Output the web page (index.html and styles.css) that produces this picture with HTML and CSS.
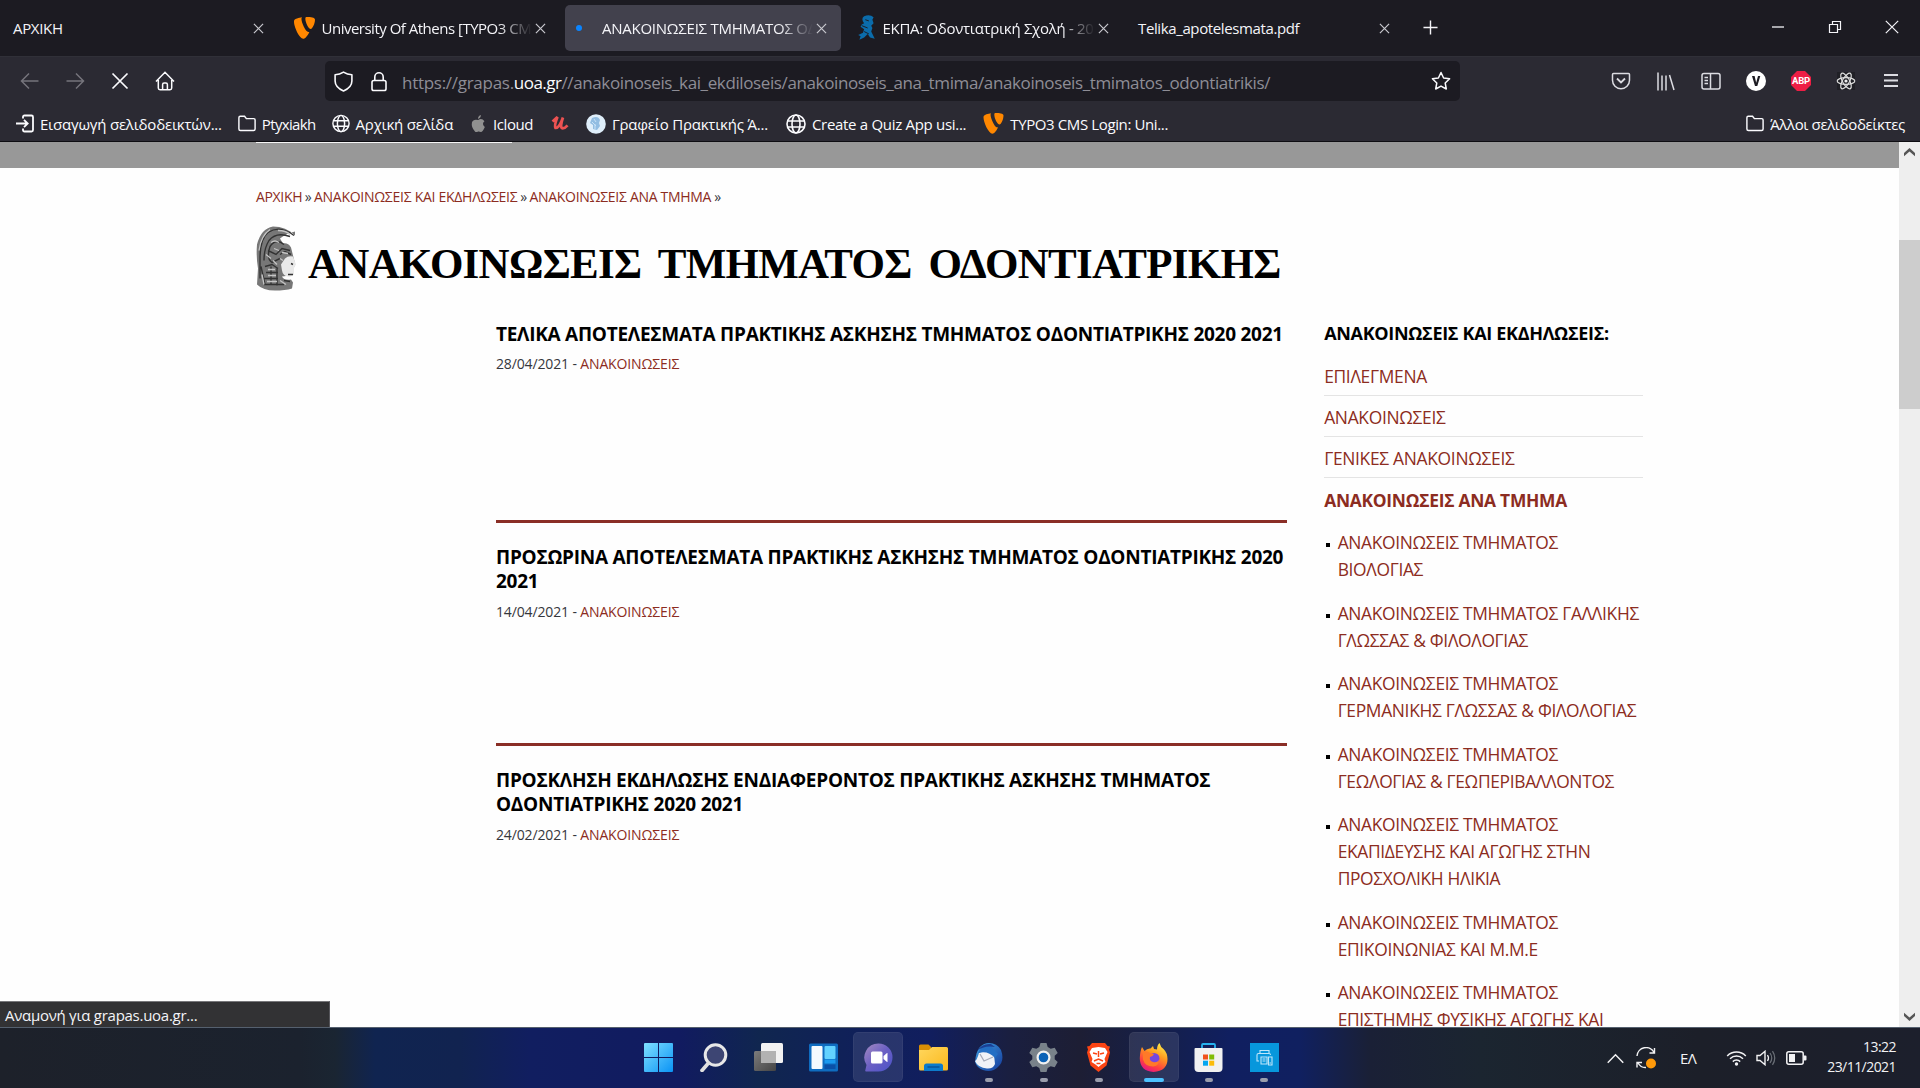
FILE: index.html
```html
<!DOCTYPE html>
<html lang="el">
<head>
<meta charset="utf-8">
<title>ΑΝΑΚΟΙΝΩΣΕΙΣ ΤΜΗΜΑΤΟΣ ΟΔΟΝΤΙΑΤΡΙΚΗΣ</title>
<link rel="stylesheet" href="styles.css">
</head>
<body>
<svg class="defs" aria-hidden="true">
  <defs>
    <symbol id="x" viewBox="0 0 12 12"><path d="M1 1l10 10M11 1L1 11" fill="none" stroke="currentColor" stroke-width="1.3"/></symbol>
    <symbol id="typo3" viewBox="0 0 20 21"><path fill="#ff8700" d="M14.6 14.3c-.3.1-.6.1-.9.1-2.700 0-6.600-9.300-6.600-12.400 0-1.100.3-1.500.6-1.800C4.400.6.800 1.800.2 3.200 0 3.600 0 4 0 4.600c0 4.800 5.100 16.200 8.900 16.200 1.700 0 4.100-2.900 5.700-6.500zM12.300 0c3.500 0 7.700.5 7.700 2.500 0 4.100-2.600 9-3.900 9-2.400 0-5.300-6.500-5.300-9.800 0-1.500.6-1.700 1.500-1.700z"/></symbol>
    <symbol id="folder" viewBox="0 0 20 18"><path d="M2.500 1h4.800l2 2.600h8.200q1.500 0 1.500 1.500v10q0 1.700-1.700 1.700H2.700Q1 16.800 1 15.100V2.500Q1 1 2.500 1z" fill="none" stroke="currentColor" stroke-width="1.600"/></symbol>
    <symbol id="globe" viewBox="0 0 20 20"><g fill="none" stroke="currentColor" stroke-width="1.600"><circle cx="10" cy="10" r="9"/><ellipse cx="10" cy="10" rx="4" ry="9"/><path d="M1.500 7h17M1.500 13h17"/></g></symbol>
    <linearGradient id="gWin" x1="0" y1="0" x2="1" y2="1"><stop offset="0" stop-color="#7fe0ff"/><stop offset="1" stop-color="#0a93f5"/></linearGradient>
    <linearGradient id="gChat" x1="0" y1="0" x2="1" y2="1"><stop offset="0" stop-color="#a58bc0"/><stop offset=".5" stop-color="#6a5fc4"/><stop offset="1" stop-color="#4a52c8"/></linearGradient>
    <linearGradient id="gFolder" x1="0" y1="0" x2="1" y2="1"><stop offset="0" stop-color="#ffd75e"/><stop offset="1" stop-color="#fbb81c"/></linearGradient>
    <linearGradient id="gFox" x1=".8" y1="0" x2=".3" y2="1"><stop offset="0" stop-color="#fff14a"/><stop offset=".4" stop-color="#ff9a1f"/><stop offset=".75" stop-color="#ff4040"/><stop offset="1" stop-color="#e31587"/></linearGradient>
    <linearGradient id="gBird" x1="0" y1="0" x2="1" y2="1"><stop offset="0" stop-color="#3fa0e0"/><stop offset="1" stop-color="#143a9c"/></linearGradient>
    <linearGradient id="gGrey" x1="0" y1="0" x2="1" y2="1"><stop offset="0" stop-color="#7c7c7c"/><stop offset="1" stop-color="#444"/></linearGradient>
  </defs>
</svg>

<div class="window">
  <header class="tabs">
    <div class="tab"><span class="tab-title t-home">ΑΡΧΙΚΗ</span><svg class="close"><use href="#x"/></svg></div>
    <div class="tab"><svg class="favicon"><use href="#typo3"/></svg><span class="tab-title t-typo">University Of Athens [TYPO3 CM</span><svg class="close"><use href="#x"/></svg></div>
    <div class="tab active"><i class="dot"></i><span class="tab-title t-ann">ΑΝΑΚΟΙΝΩΣΕΙΣ ΤΜΗΜΑΤΟΣ ΟΔ</span><svg class="close"><use href="#x"/></svg></div>
    <div class="tab"><svg class="favicon narrow" viewBox="0 0 16 22"><path fill="#0b6cab" d="M6 1Q11-1 14 2l-1 2 1 3-2 2 1 2-1 3 3 6-4-1-2-3-3 3-4 2 1-3-2-1 4-2 1-3-3-2 1-2 2-1Q3 3 6 1z"/><path d="M7 4l3 1M4 9l5 2M6 14l4 2" stroke="#1c1b22" stroke-width=".8"/></svg><span class="tab-title t-ekpa">ΕΚΠΑ: Οδοντιατρική Σχολή - 20</span><svg class="close"><use href="#x"/></svg></div>
    <div class="tab"><span class="tab-title t-pdf">Telika_apotelesmata.pdf</span><svg class="close"><use href="#x"/></svg></div>
    <svg class="newtab" viewBox="0 0 16 16"><path d="M8 .5v15M.5 8h15" stroke="currentColor" stroke-width="1.500"/></svg>
    <div class="controls">
      <svg viewBox="0 0 14 14"><path d="M1 7h12" stroke="currentColor" stroke-width="1.300"/></svg>
      <svg viewBox="0 0 14 14"><path d="M1.500 4.500h8v8h-8zM4.500 4V1.500h8v8H10" fill="none" stroke="currentColor" stroke-width="1.200"/></svg>
      <svg viewBox="0 0 14 14"><path d="M.8.8l12.400 12.400M13.200.8L.8 13.200" stroke="currentColor" stroke-width="1.200"/></svg>
    </div>
  </header>

  <div class="navbar">
    <div class="nav-buttons">
      <svg class="dim" viewBox="0 0 20 20"><path d="M18.500 10H2M9 2.500L1.500 10 9 17.500" fill="none" stroke="currentColor" stroke-width="1.500"/></svg>
      <svg class="dim" viewBox="0 0 20 20"><path d="M1.500 10H18M11 2.500l7.500 7.500-7.500 7.500" fill="none" stroke="currentColor" stroke-width="1.500"/></svg>
      <svg viewBox="0 0 20 20"><path d="M2.500 2.500l15 15M17.500 2.500l-15 15" stroke="currentColor" stroke-width="1.700"/></svg>
      <svg viewBox="0 0 20 20"><path d="M1 10.500L10 1.300l9 9.200M3.300 9v8q0 1.700 1.700 1.700h10q1.700 0 1.700-1.700V9M7.600 18.500v-5q0-1.500 1.500-1.500h1.800q1.500 0 1.500 1.500v5" fill="none" stroke="currentColor" stroke-width="1.500"/></svg>
    </div>
    <div class="urlbar">
      <svg class="shield" viewBox="0 0 18 20"><path d="M9 1q3.500 2.300 8 2.500v6q0 6-8 9.500-8-3.500-8-9.500v-6Q5.500 3.300 9 1z" fill="none" stroke="currentColor" stroke-width="1.500" stroke-linejoin="round"/></svg>
      <svg class="lock" viewBox="0 0 16 20"><rect x="1" y="9" width="14" height="10" rx="1.800" fill="none" stroke="currentColor" stroke-width="1.600"/><path d="M3.800 9V5.500a4.200 4.200 0 018.400 0V9" fill="none" stroke="currentColor" stroke-width="1.600"/></svg>
      <div class="url"><span class="u1">https://grapas.</span><span class="host">uoa.gr</span><span class="u2">//anakoinoseis_kai_ekdiloseis/anakoinoseis_ana_tmima/anakoinoseis_tmimatos_odontiatrikis/</span></div>
      <svg class="star" viewBox="0 0 20 20"><path d="M10 1.500l2.600 5.500 6 .8-4.400 4.200 1.100 6L10 15.100 4.700 18l1.100-6L1.400 7.800l6-.8z" fill="none" stroke="currentColor" stroke-width="1.500" stroke-linejoin="round"/></svg>
    </div>
    <div class="extensions">
      <svg viewBox="0 0 20 20"><path d="M2.500 2.500h15q1 0 1 1v5.700a8.500 8.500 0 01-17 0V3.500q0-1 1-1z" fill="none" stroke="currentColor" stroke-width="1.500"/><path d="M6 7.500l4 4 4-4" fill="none" stroke="currentColor" stroke-width="1.800"/></svg>
      <svg viewBox="0 0 20 20"><path d="M2 1.500v18M6 4.500v15M10 4.500v15M13.500 4l4.500 15" fill="none" stroke="currentColor" stroke-width="1.500"/></svg>
      <svg viewBox="0 0 20 20"><rect x="1" y="2.500" width="18" height="15.500" rx="2" fill="none" stroke="currentColor" stroke-width="1.500"/><path d="M9.500 2.500V18M3.500 6.500h3.500M3.500 9.500h3.500M3.500 12.500h3.500" stroke="currentColor" stroke-width="1.500"/></svg>
      <svg viewBox="0 0 20 20"><circle cx="10" cy="10" r="10" fill="#fff"/><path d="M6 5h2.600l1.600 6.800L12 5h2.300l-3 10H9z" fill="#1c1b22"/></svg>
      <span class="abp">ABP</span>
      <svg viewBox="0 0 20 20"><rect x="1" y="1" width="18" height="18" fill="#202026"/><g fill="none" stroke="#ddd" stroke-width="1.200"><ellipse cx="10" cy="10" rx="8.800" ry="3.400"/><ellipse cx="10" cy="10" rx="8.800" ry="3.400" transform="rotate(60 10 10)"/><ellipse cx="10" cy="10" rx="8.800" ry="3.400" transform="rotate(120 10 10)"/></g><circle cx="10" cy="10" r="1.600" fill="#eee"/></svg>
      <svg viewBox="0 0 20 20"><path d="M3 4h14M3 9.500h14M3 15h14" stroke="currentColor" stroke-width="1.800"/></svg>
    </div>
  </div>

  <div class="bookmarks">
    <span class="bm"><svg viewBox="0 0 18 18"><path d="M7 4V2.500Q7 1 8.500 1h7Q17 1 17 2.500v13q0 1.500-1.500 1.500h-7Q7 17 7 15.500V14M0 9h11.500M8 5.300L11.700 9 8 12.700" fill="none" stroke="currentColor" stroke-width="1.800"/></svg><b class="s1">Εισαγωγή σελιδοδεικτών...</b></span>
    <span class="bm"><svg><use href="#folder"/></svg><b class="s2">Ptyxiakh</b></span>
    <span class="bm"><svg><use href="#globe"/></svg><b class="s3">Αρχική σελίδα</b></span>
    <span class="bm"><svg viewBox="0 0 18 20"><path fill="#909090" d="M12 1q.2 3-3 4.200Q9 2 12 1zM9.200 6.300Q13 4 15.800 7.500q-3.300 2.500.4 6.300Q14 19 12 19q-1.500-.8-2.800-.6-2 .9-3.200.3Q1.600 14 2.600 9 4 5 9.200 6.300z"/></svg><b class="s4">Icloud</b></span>
    <span class="bm udemy"><svg viewBox="0 0 18 18"><path d="M1.500 7Q5 4 6.500 2.500 3 11 4.500 13.500 8 14 12 3 8.500 13 11.500 13.800q2.500 0 5-3" fill="none" stroke="#ec5252" stroke-width="2.700"/></svg></span>
    <span class="bm"><svg class="seal" viewBox="0 0 20 20"><circle cx="10" cy="10" r="9.800" fill="#dfeefa"/><path d="M6 4q6-3 8 2l-1 3 1 3-3 4-4-1V11L4 9z" fill="#92bde2"/><path d="M8 5l2 3M6 8l4 4M9 10v5" stroke="#c9e2f6"/></svg><b class="s6">Γραφείο Πρακτικής Ά...</b></span>
    <span class="bm"><svg class="big"><use href="#globe"/></svg><b class="s7">Create a Quiz App usi...</b></span>
    <span class="bm"><svg class="wide"><use href="#typo3"/></svg><b class="s8">TYPO3 CMS Login: Uni...</b></span>
    <span class="bm last"><svg><use href="#folder"/></svg><b class="s9">Άλλοι σελιδοδείκτες</b></span>
  </div>

  <div class="viewport">
    <div class="page">
      <div class="band"><div class="band-line"></div></div>
      <div class="container">
        <nav class="crumbs"><a class="c1">ΑΡΧΙΚΗ</a><i>»</i><a class="c2">ΑΝΑΚΟΙΝΩΣΕΙΣ ΚΑΙ ΕΚΔΗΛΩΣΕΙΣ</a><i>»</i><a class="c3">ΑΝΑΚΟΙΝΩΣΕΙΣ ΑΝΑ ΤΜΗΜΑ</a><i>»</i></nav>
        <div class="heading">
          <svg class="athena" viewBox="0 0 40 64">
            <path fill="#777" d="M39 9Q30 0 17 0 5 2 1 18 0 30 2 42L1 58q6 6 18 6 10 0 17-2l1-6-2-3q-7 1-9-3l8-1 3-4 2-8-2-8-2-8q-3-5-8-4l-3-5q6-5 15-7z"/>
            <path fill="#e9e9e9" d="M29 32q3-3 8-2l3 8-2 3v7l-3 2q-8 1-9-6l-1-6z"/>
            <g fill="none" stroke="#333" stroke-width="1.400"><path d="M38 9Q24-2 12 6 4 12 4 32v20M34 10Q20 5 13 14q-5 8-5 20M28 18q-8-7-14 2-4 12 2 16l8-4M12 24l8 4 6-6 8 2M9 40l7-2 6 4M10 46h12M8 52h14M8 58h20M15 40v18M21 42v17M5 40l4 18M24 28l5-3 6 3M35 37l2 1M32 48l5 0M28 54l6 1"/></g>
            <g fill="none" stroke="#c4c4c4" stroke-width="1.300"><path d="M14 3Q5 9 3 24M22 4q8 0 12 4M15 16q4-3 8 0M10 28l5 4M17 34l4 4M12 43h7M12 49h8M6 48l2 10M24 54l6 4M18 22l5 2M11 55h10M26 26l6 1M24 32l3 2"/></g>
          </svg>
          <h1>ΑΝΑΚΟΙΝΩΣΕΙΣ ΤΜΗΜΑΤΟΣ ΟΔΟΝΤΙΑΤΡΙΚΗΣ</h1>
        </div>
        <div class="columns">
          <main>
            <article class="first"><h2>ΤΕΛΙΚΑ ΑΠΟΤΕΛΕΣΜΑΤΑ ΠΡΑΚΤΙΚΗΣ ΑΣΚΗΣΗΣ ΤΜΗΜΑΤΟΣ ΟΔΟΝΤΙΑΤΡΙΚΗΣ 2020 2021</h2><p>28/04/2021 - <a>ΑΝΑΚΟΙΝΩΣΕΙΣ</a></p></article>
            <article><h2>ΠΡΟΣΩΡΙΝΑ ΑΠΟΤΕΛΕΣΜΑΤΑ ΠΡΑΚΤΙΚΗΣ ΑΣΚΗΣΗΣ ΤΜΗΜΑΤΟΣ ΟΔΟΝΤΙΑΤΡΙΚΗΣ 2020<br>2021</h2><p>14/04/2021 - <a>ΑΝΑΚΟΙΝΩΣΕΙΣ</a></p></article>
            <article class="open"><h2>ΠΡΟΣΚΛΗΣΗ ΕΚΔΗΛΩΣΗΣ ΕΝΔΙΑΦΕΡΟΝΤΟΣ ΠΡΑΚΤΙΚΗΣ ΑΣΚΗΣΗΣ ΤΜΗΜΑΤΟΣ<br>ΟΔΟΝΤΙΑΤΡΙΚΗΣ 2020 2021</h2><p>24/02/2021 - <a>ΑΝΑΚΟΙΝΩΣΕΙΣ</a></p></article>
          </main>
          <aside>
            <h3>ΑΝΑΚΟΙΝΩΣΕΙΣ ΚΑΙ ΕΚΔΗΛΩΣΕΙΣ:</h3>
            <a class="item">ΕΠΙΛΕΓΜΕΝΑ</a>
            <a class="item">ΑΝΑΚΟΙΝΩΣΕΙΣ</a>
            <a class="item">ΓΕΝΙΚΕΣ ΑΝΑΚΟΙΝΩΣΕΙΣ</a>
            <a class="item current">ΑΝΑΚΟΙΝΩΣΕΙΣ ΑΝΑ ΤΜΗΜΑ</a>
            <ul>
              <li>ΑΝΑΚΟΙΝΩΣΕΙΣ ΤΜΗΜΑΤΟΣ<br>ΒΙΟΛΟΓΙΑΣ</li>
              <li>ΑΝΑΚΟΙΝΩΣΕΙΣ ΤΜΗΜΑΤΟΣ ΓΑΛΛΙΚΗΣ<br>ΓΛΩΣΣΑΣ &amp; ΦΙΛΟΛΟΓΙΑΣ</li>
              <li>ΑΝΑΚΟΙΝΩΣΕΙΣ ΤΜΗΜΑΤΟΣ<br>ΓΕΡΜΑΝΙΚΗΣ ΓΛΩΣΣΑΣ &amp; ΦΙΛΟΛΟΓΙΑΣ</li>
              <li>ΑΝΑΚΟΙΝΩΣΕΙΣ ΤΜΗΜΑΤΟΣ<br>ΓΕΩΛΟΓΙΑΣ &amp; ΓΕΩΠΕΡΙΒΑΛΛΟΝΤΟΣ</li>
              <li>ΑΝΑΚΟΙΝΩΣΕΙΣ ΤΜΗΜΑΤΟΣ<br>ΕΚΑΠΙΔΕΥΣΗΣ ΚΑΙ ΑΓΩΓΗΣ ΣΤΗΝ<br>ΠΡΟΣΧΟΛΙΚΗ ΗΛΙΚΙΑ</li>
              <li>ΑΝΑΚΟΙΝΩΣΕΙΣ ΤΜΗΜΑΤΟΣ<br>ΕΠΙΚΟΙΝΩΝΙΑΣ ΚΑΙ Μ.Μ.Ε</li>
              <li>ΑΝΑΚΟΙΝΩΣΕΙΣ ΤΜΗΜΑΤΟΣ<br>ΕΠΙΣΤΗΜΗΣ ΦΥΣΙΚΗΣ ΑΓΩΓΗΣ ΚΑΙ</li>
            </ul>
          </aside>
        </div>
      </div>
      <div class="status">Αναμονή για grapas.uoa.gr...</div>
    </div>
    <div class="scrollbar">
      <svg viewBox="0 0 10 8"><path d="M0 7.500V4.500L5 0l5 4.500v3L5 3.200z" fill="#555"/></svg>
      <div class="thumb"></div>
      <svg viewBox="0 0 10 8"><path d="M0 .5v3L5 8l5-4.500v-3L5 4.800z" fill="#555"/></svg>
    </div>
  </div>

  <footer class="taskbar">
    <div class="tray-left"></div>
    <div class="apps">
      <div class="app"><svg viewBox="0 0 29 29"><path fill="url(#gWin)" d="M0 1q0-1 1-1h13v14H0zM15 0h13q1 0 1 1v13H15zM0 15h14v14H1q-1 0-1-1zM15 15h14v13q0 1-1 1H15z"/></svg></div>
      <div class="app"><svg viewBox="0 0 29 29"><circle cx="16.500" cy="12" r="10.300" fill="#3d4573" stroke="#e8e8e8" stroke-width="3"/><path d="M9.500 20L3 27.500" stroke="#e0e0e0" stroke-width="3.600" stroke-linecap="round"/></svg></div>
      <div class="app"><svg viewBox="0 0 29 29"><rect y="8" width="22" height="20" rx="1.500" fill="url(#gGrey)"/><rect x="7" width="22" height="20" rx="1.500" fill="#f2f2f2"/><path d="M7 8h15v12H7z" fill="#b2b2b2"/></svg></div>
      <div class="app"><svg viewBox="0 0 29 29"><rect width="29" height="28" y=".5" rx="1.500" fill="#0f6cc0"/><rect x="2.500" y="3" width="11" height="23" rx="1" fill="#f5fafe"/><rect x="15.500" y="3" width="11" height="13" rx="1" fill="#63d2ff"/><path d="M15.500 16.500h11v4h-11z" fill="#1b9af0"/><path d="M15.500 21.500h11V26h-11z" fill="#0a50a8"/></svg></div>
      <div class="app on"><svg viewBox="0 0 29 29"><path d="M14.500.5a14 14 0 110 28H2q-1 0-.7-1.200L2.500 22A14 14 0 0114.500.500z" fill="url(#gChat)"/><rect x="7" y="8.500" width="11.500" height="12" rx="1.500" fill="#fff"/><path d="M19.500 13l3.500-3q.5-.3.5.5v8q0 .8-.5.5l-3.500-3z" fill="#fff"/></svg></div>
      <div class="app"><svg viewBox="0 0 29 29"><path d="M0 8V3q0-1.500 1.500-1.500h8L12 4v4z" fill="#d98e04"/><path d="M0 7h10l3-3h14.500Q29 4 29 5.500V26q0 1.500-1.500 1.500h-26Q0 27.500 0 26z" fill="url(#gFolder)"/><path d="M5 28v-5q0-2.500 2.500-2.500h14Q24 20.500 24 23v5z" fill="#0d7bcb"/><path d="M8.500 24h12" stroke="#0a4f94" stroke-width="1.300"/></svg></div>
      <div class="app run"><svg viewBox="0 0 29 29"><path d="M15 0q8 0 12 7 4 11-3 17-6 6-15 3Q3 25 1 19 2 8 6 4q4-4 9-4z" fill="url(#gBird)"/><path d="M5 10q7-4 15 2l1 9q-2 5-8 4.500Q4 25 1 18q2-1 4-8z" fill="#f0f2f7"/><path d="M6 11l4 7 9-4" fill="none" stroke="#a8adbb" stroke-width="1.300"/><path d="M4 10Q8 1 17 3l7 8-3 4Q14 7 4 10z" fill="#246fc4"/><path d="M3 8Q8 0 17 1l4 3Q10 2 3 8z" fill="#1a3f94"/></svg></div>
      <div class="app run"><svg viewBox="0 0 29 29"><path fill="#79828a" d="M11.500 0h6l1.200 4 3 1.700 4-1 3 5.200-3 2.900v3.400l3 2.900-3 5.200-4-1-3 1.700-1.200 4h-6l-1.200-4-3-1.700-4 1-3-5.200 3-2.900v-3.400L.3 9.900l3-5.200 4 1 3-1.700z"/><circle cx="14.500" cy="14.500" r="5.900" fill="#0b62b6" stroke="#f1f1f1" stroke-width="2.200"/></svg></div>
      <div class="app run"><svg viewBox="0 0 29 29"><path d="M8 0h13l2.500 3 2.500.5L25 6.500l1 3-3.500 13L14.500 29l-8-6.500L3 9.500l1-3-1-3 2.500-.5z" fill="#fb4413"/><path d="M8 5l6.500-1L21 5l2.500 4-3 7 1 3-4 2.500-3 2.500-3-2.500-4-2.500 1-3-3-7z" fill="#fff"/><path d="M9 10l4 1M20 10l-4 1M14.500 8v6M10 18l4.500-2 4.500 2M12.500 20.500h4" stroke="#fb4413" stroke-width="1.500" fill="none"/></svg></div>
      <div class="app run on focus"><svg viewBox="0 0 29 29"><path d="M3 4l2.500 4q3-3 6-2.500L14 3l1 3 3 .5Q18 2 20.500 0q1 4 4 6 4 4 4 10 0 12-14 13Q1 28 .8 15.500 1 8 3 4z" fill="url(#gFox)"/><circle cx="15" cy="15.500" r="5.500" fill="#7547e0"/><path d="M4 8q5 0 7 2l4 1q-1 2.500-4 3-1 4 3 5 4 1 6-2 0 6-6 6.500-8 0-10-7z" fill="#ff7a28"/></svg></div>
      <div class="app run"><svg viewBox="0 0 29 29"><path d="M8 6V2q0-1 1-1h11q1 0 1 1v4" fill="none" stroke="#27b2ee" stroke-width="1.800"/><path d="M.5 6q0-1 1-1h26q1 0 1 1v19q0 4-4 4h-20q-4 0-4-4z" fill="#f1f1f1"/><path d="M9 11.500h5v5H9z" fill="#f1511b"/><path d="M15.200 11.500h5v5h-5z" fill="#80bc06"/><path d="M9 17.700h5v5H9z" fill="#05a6f0"/><path d="M15.200 17.700h5v5h-5z" fill="#fbbc09"/></svg></div>
      <div class="app run"><svg viewBox="0 0 29 29"><path d="M0 0h29v29H0z" fill="#0797dc"/><path d="M10 10V7.500h9V10M9 18H7v-6q0-1.500 1.500-1.500H19q1.500 0 1.500 1.500M11 14h6v7h-6zM18.500 14h3.500v8h-3.500zM12.500 16h3M12.500 18h3M19.500 20h1.500" fill="none" stroke="#bfe6fa" stroke-width="1.100"/></svg></div>
    </div>
    <div class="tray">
      <svg class="chev" viewBox="0 0 16 10"><path d="M.7 9L8 1.500 15.300 9" fill="none" stroke="currentColor" stroke-width="1.400"/></svg>
      <svg class="sync" viewBox="0 0 20 22"><path d="M1 9a9 9 0 0117-3.500M18.500 1v5h-5M1 20.500v-5h5M2 16q3 5 8 4.500" fill="none" stroke="currentColor" stroke-width="1.400"/><circle cx="15" cy="16.500" r="5" fill="#ff9a0a"/></svg>
      <span class="lang">ΕΛ</span>
      <svg class="wifi" viewBox="0 0 20 16"><g fill="none" stroke="currentColor" stroke-width="1.500"><path d="M.7 6a13 13 0 0118.600 0M3.500 8.800a9.200 9.200 0 0113 0M6.300 11.600a5.200 5.200 0 017.400 0"/></g><circle cx="10" cy="14" r="1.700" fill="currentColor"/></svg>
      <svg class="vol" viewBox="0 0 20 16"><path d="M1 5.500h3L9 1.300v13.400l-5-4.200H1z" fill="none" stroke="currentColor" stroke-width="1.400"/><path d="M11.500 5q2 3 0 6" fill="none" stroke="currentColor" stroke-width="1.300"/><path d="M14 3q3.500 5 0 10M16.500 1.200q4.500 6.800 0 13.600" fill="none" stroke="#6b7078" stroke-width="1.200"/></svg>
      <svg class="bat" viewBox="0 0 21 14"><rect x=".8" y=".8" width="16.400" height="12.400" rx="2" fill="none" stroke="currentColor" stroke-width="1.500"/><path d="M3 3h6v8H3zM18 4.500h1.500q1 0 1 1v3q0 1-1 1H18z" fill="currentColor"/></svg>
      <div class="clock"><span>13:22</span><span>23/11/2021</span></div>
    </div>
  </footer>
</div>
</body>
</html>
```
FILE: styles.css
```css
* { box-sizing: border-box; }
body { margin: 0; font: 15px "Open Sans", "Noto Sans", sans-serif; }
h1, h2, h3, p, ul { margin: 0; padding: 0; }
.defs { position: absolute; width: 0; height: 0; }
svg { flex: none; display: block; }

.window { width: 1920px; height: 1088px; display: flex; flex-direction: column; overflow: hidden; }

/* Tab strip */
.tabs { height: 56px; flex: none; display: flex; align-items: flex-start; padding: 5px 21px 0 2px; gap: 5.500px; background: #1c1b22; color: #f4f4f8; }
.tab { width: 276px; height: 46px; display: flex; align-items: center; gap: 7px; padding: 0 14px 0 10px; border-radius: 5px; flex: none; }
.tab.active { background: #42414d; }
.tab-title { flex: 1; min-width: 0; white-space: nowrap; line-height: 24px; }
.favicon { width: 21px; height: 26px; }
.favicon.narrow { width: 19px; }
.tab .close { width: 11px; height: 11px; color: #c9c9cf; margin-left: -4px; }
.dot { width: 6px; height: 6px; border-radius: 50%; background: #0a84ff; margin: 0 13px 0 1px; flex: none; }
.t-home { letter-spacing: -.32px; padding-left: 1px; }
.t-typo { letter-spacing: -.5px; }
.t-ann { letter-spacing: -.25px; }
.t-ekpa { letter-spacing: -.3px; }
.t-pdf { letter-spacing: -.38px; }
.t-typo, .t-ann, .t-ekpa { -webkit-mask-image: linear-gradient(90deg, #000 84%, transparent 100%); mask-image: linear-gradient(90deg, #000 84%, transparent 100%); }
.newtab { width: 15px; height: 15px; margin: 15px 0 0 13px; }
.controls { margin: 15px 0 0 auto; display: flex; gap: 43px; }
.controls svg { width: 14px; height: 14px; }

/* Address row */
.navbar { height: 52px; flex: none; display: flex; align-items: flex-start; background: #2b2a33; color: #fbfbfe; padding: 4px 19px 0 20px; border-top: 1px solid #303038; }
.nav-buttons { display: flex; gap: 25px; padding-top: 10px; width: 305px; }
.nav-buttons svg { width: 20px; height: 20px; }
.nav-buttons .dim { color: #75747c; }
.urlbar { width: 1135px; height: 40px; display: flex; align-items: center; padding: 0 9px; background: #1c1b22; border-radius: 5px; }
.shield { width: 19px; height: 21px; }
.lock { width: 16px; height: 21px; margin-left: 18px; }
.url { margin: 3px auto 0 15px; font-size: 17px; color: #8e8d96; white-space: nowrap; }
.url .u1 { letter-spacing: -.28px; }
.url .host { color: #fbfbfe; letter-spacing: -.52px; }
.url .u2 { letter-spacing: -.382px; }
.star { width: 20px; height: 20px; }
.extensions { margin-left: auto; display: flex; gap: 25px; padding-top: 10px; }
.extensions svg, .abp { width: 20px; height: 20px; color: #dcdce2; }
.abp { background: #ed1e45; clip-path: polygon(30% 0, 70% 0, 100% 30%, 100% 70%, 70% 100%, 30% 100%, 0 70%, 0 30%); font: 700 9.500px/20px Roboto, sans-serif; color: #fff; text-align: center; letter-spacing: -.2px; }

/* Bookmarks row */
.bookmarks { height: 34px; flex: none; display: flex; align-items: center; gap: 16px; padding: 0 15px 2px 16px; background: #2b2a33; border-bottom: 1px solid #0e0d12; color: #fbfbfe; }
.bm { display: flex; align-items: center; gap: 6px; }
.bm svg { width: 18px; height: 19px; }
.bm svg.seal, .bm svg.big { width: 20px; height: 20px; }
.bm svg.wide { width: 21px; height: 21px; }
.bm b { font-weight: 400; white-space: nowrap; padding-top: 1px; }
.bm.last { margin-left: auto; }
.bm.udemy { padding: 0 1px 0 2px; }
.s1 { letter-spacing: -.21px; }
.s2 { letter-spacing: -.65px; }
.s3 { letter-spacing: -.22px; }
.s4 { letter-spacing: -.45px; }
.s6 { letter-spacing: -.21px; padding-right: 2px; }
.s7 { letter-spacing: -.3px; padding-right: 1px; }
.s8 { letter-spacing: -.38px; }
.s9 { letter-spacing: -.36px; }

/* Page */
.viewport { height: 885px; flex: none; display: flex; }
.page { flex: 1; min-width: 0; background: #fefefe; overflow: hidden; position: relative; }
.band { height: 25.500px; background: #989898; padding-left: 256px; }
.band-line { width: 256px; height: 1px; background: #f5f5f5; }
.container { width: 1387px; margin-left: 256px; }
.crumbs { display: flex; padding-top: 19px; height: 58px; font-size: 14px; line-height: 20px; color: #35373c; white-space: nowrap; }
.crumbs a { color: #8c2c21; }
.crumbs i { font-style: normal; width: 11.500px; text-align: center; }
.crumbs .c1 { width: 46.500px; letter-spacing: -.33px; }
.crumbs .c2 { width: 204px; letter-spacing: -.28px; }
.crumbs .c3 { width: 182.500px; letter-spacing: -.3px; }
.heading { display: flex; height: 77px; }
.athena { width: 40px; height: 65px; }
h1 { margin: 13px 0 0 12px; font: 700 43px/50px "Liberation Serif", serif; letter-spacing: -.72px; word-spacing: 7px; color: #000; white-space: nowrap; }
.columns { display: flex; gap: 38px; padding-left: 240px; }
main { width: 791px; }
article { height: 223px; padding-top: 22px; border-bottom: 3px solid #8a2e26; }
article.first { height: 220px; padding-top: 19px; }
article.open { border: 0; }
h2 { font-size: 19px; line-height: 24.500px; letter-spacing: -.26px; color: #000; white-space: nowrap; }
article p { margin-top: 8px; font-size: 14px; line-height: 20px; letter-spacing: -.14px; color: #35373c; }
article a { color: #8c2c21; }
aside { width: 319px; margin-left: -.5px; padding-top: 18.500px; }
h3 { font-size: 18px; line-height: 24px; height: 33.500px; letter-spacing: -.318px; white-space: nowrap; }
.item { display: block; height: 41.300px; padding-top: 9.300px; border-bottom: 1px solid #e4e4e4; font-size: 17.400px; line-height: 24px; letter-spacing: -.3px; color: #8c2c21; white-space: nowrap; }
.item.current { border: 0; font-weight: 700; letter-spacing: -.26px; }
aside ul { list-style: none; margin-top: 9.300px; }
aside li { position: relative; padding-left: 13.500px; margin-bottom: 16.450px; font-size: 17.400px; line-height: 27.050px; letter-spacing: -.32px; color: #8c2c21; white-space: nowrap; }
aside li::before { content: ""; position: absolute; left: 2px; top: 14px; width: 4px; height: 4px; background: #000; }
.status { position: absolute; left: 0; bottom: 0; width: 330px; height: 26px; padding-left: 5px; background: #323234; border-top: 1px solid #77777a; border-right: 1px solid #55555a; color: #f4f4f8; line-height: 26px; letter-spacing: -.27px; }
.scrollbar { width: 21px; flex: none; background: #eee; display: flex; flex-direction: column; align-items: center; padding: 6px 0; }
.scrollbar svg { width: 11px; height: 9px; }
.thumb { width: 21px; height: 169px; margin: 83px 0 auto; background: #cdcdcd; }

/* Taskbar */
.taskbar { flex: 1; display: grid; grid-template-columns: 630px 662px 1fr; border-top: 1px solid #55606e; color: #f2f2f4; background: linear-gradient(90deg, #1d212a 0, #1b222e 300px, #1a2532 335px, #102450 375px, #112350 460px, #111e60 530px, #111b60 680px, #10264f 760px, #10205a 860px, #111e5e 930px, #1a1f40 1010px, #1d1e34 1080px, #151f4a 1160px, #101f60 1230px, #102060 1300px, #1a2036 1370px, #1b2530 1480px, #1c1f29 1700px, #1c1f2c); }
.apps { display: flex; gap: 5.100px; padding: 4px 0 0 3px; }
.app { width: 50px; height: 50px; padding: 10.500px; border-radius: 5px; display: flex; flex-direction: column; align-items: center; flex: none; }
.app svg { width: 29px; height: 29px; }
.app.on { background: #ffffff1a; box-shadow: inset 0 0 0 1px #ffffff0c; }
.app.run::after { content: ""; width: 8px; height: 4px; border-radius: 2px; background: #9a9dac; margin-top: 6px; flex: none; }
.app.focus::after { width: 20px; background: #4cc2ff; }
.tray { display: flex; align-items: center; padding-right: 24px; justify-content: flex-end; color: #f2f2f4; }
.chev { width: 17px; height: 11px; margin-right: 12px; }
.sync { width: 20px; height: 22px; margin-right: 24px; }
.lang { font-size: 15px; letter-spacing: -.6px; width: 18px; margin-right: 28px; }
.wifi { width: 21px; height: 16px; margin-right: 9px; }
.vol { width: 20px; height: 16px; margin-right: 10px; }
.bat { width: 21px; height: 14px; margin-right: 19px; }
.clock { display: flex; flex-direction: column; align-items: flex-end; width: 70px; font-size: 14px; line-height: 20px; letter-spacing: -.55px; margin-top: -2px; }
```
